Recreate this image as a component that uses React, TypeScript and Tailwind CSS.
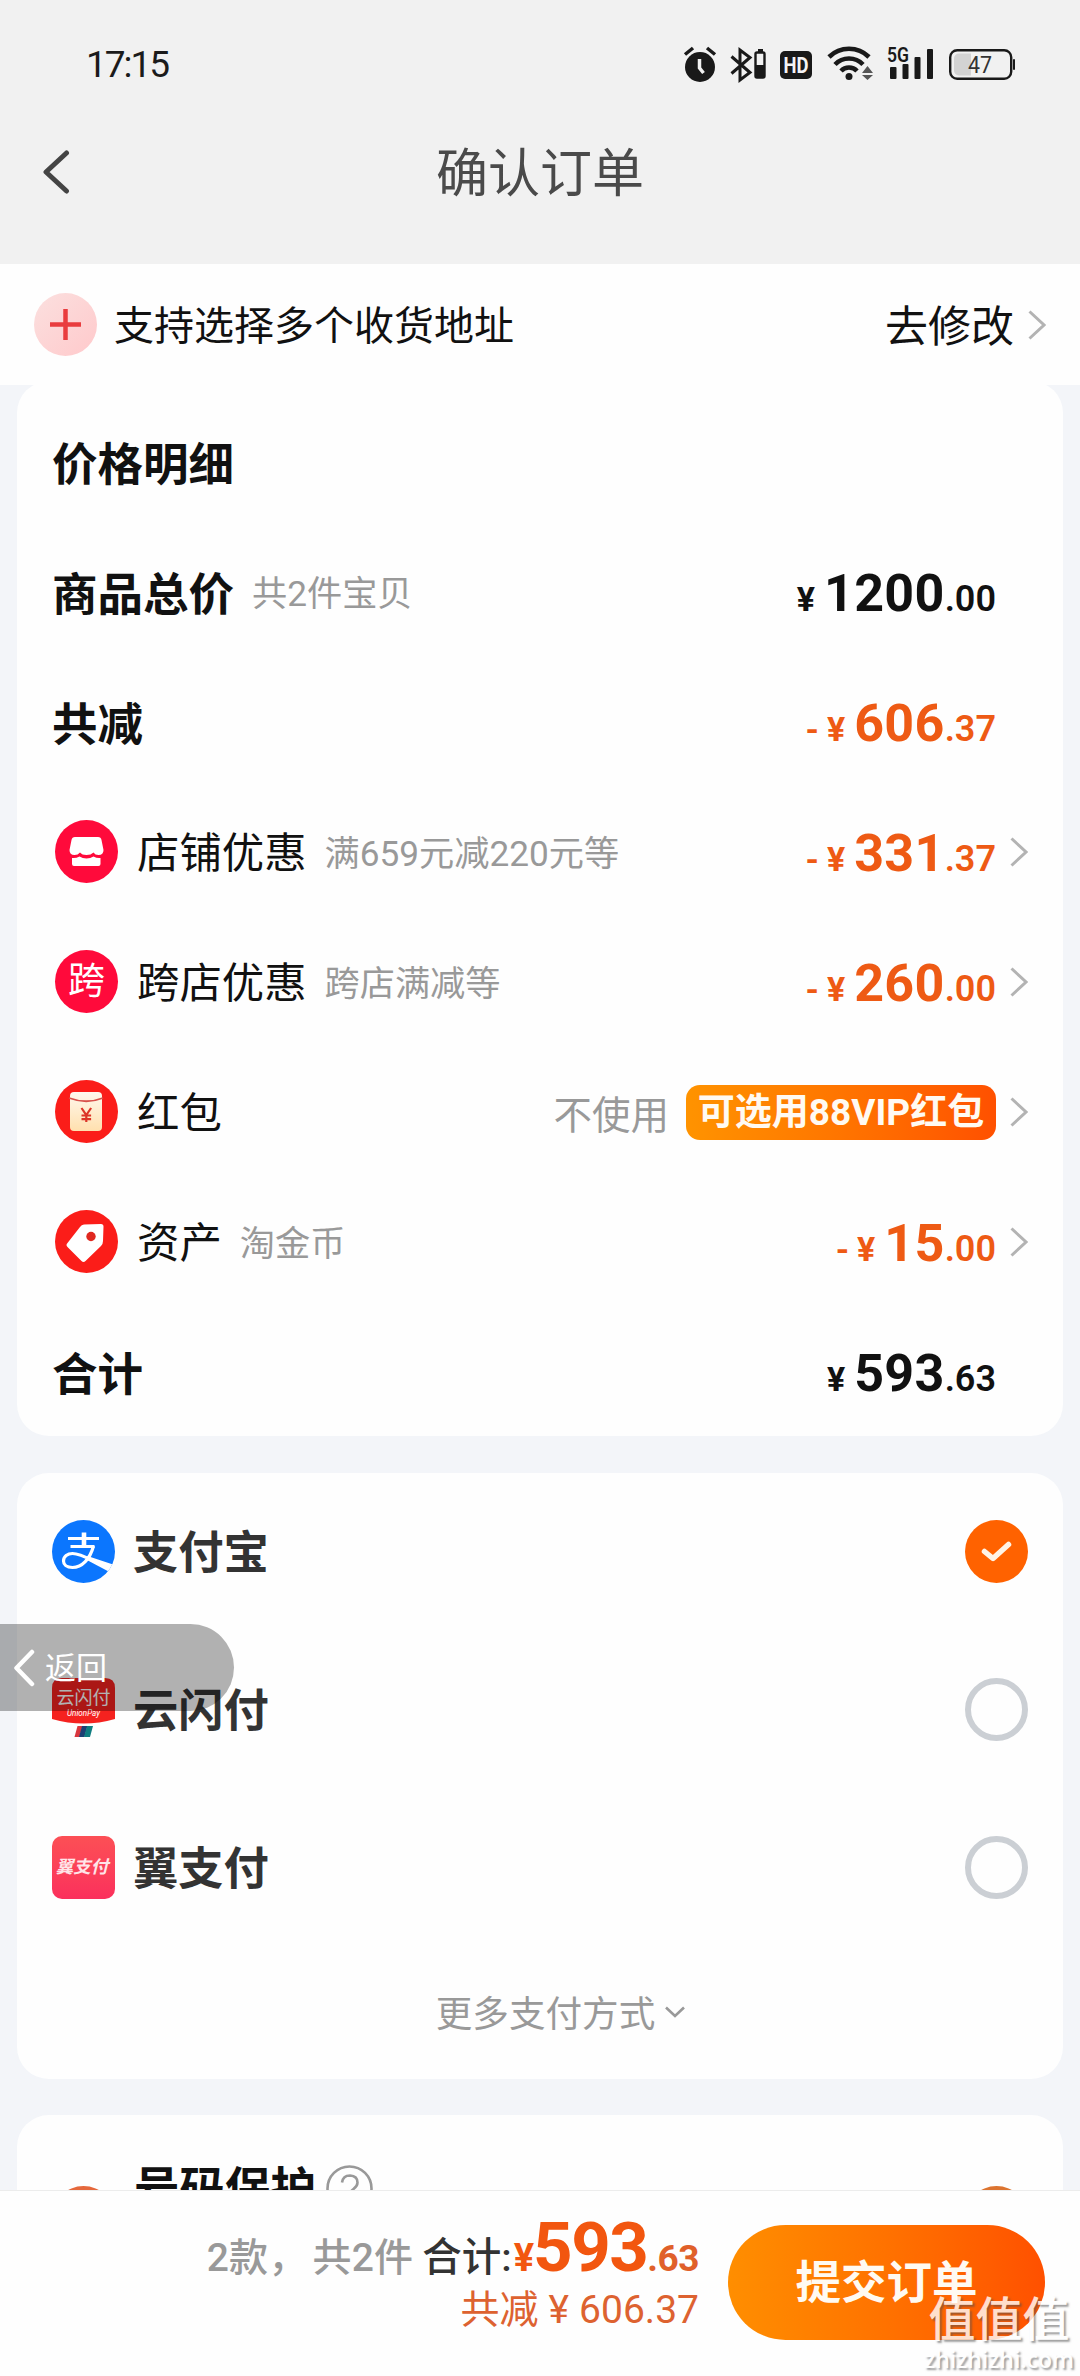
import React from "react";

const CJK = "font-['Roboto','Noto_Sans_CJK_SC',sans-serif]";

function Chevron() {
  return (
    <svg width="18" height="30" viewBox="0 0 18 30" fill="none" stroke="#b3b3b3" strokeWidth="3">
      <path d="M1.5 1.5 16 15 1.5 28.5" />
    </svg>
  );
}

function StatusBar() {
  return (
    <div className="flex h-[130px] items-center justify-between pl-[86px] pr-[65px]">
      <span className="text-[37px] leading-[40px] tracking-[-2px] text-[#1b1b1b]">17:15</span>
      <svg width="332" height="40" viewBox="0 0 332 40" fill="#191919">
        {/* alarm clock */}
        <circle cx="17" cy="22" r="15" />
        <path d="M2 9.500 10 3M32 9.500 24 3" stroke="#191919" strokeWidth="3.500" />
        <path d="M16.500 14v9l4 5" stroke="#f1f1f1" strokeWidth="3.500" fill="none" />
        {/* bluetooth with battery */}
        <path d="M48.500 11.500 67 27.500 57 35V5l10 7.500L48.500 28.500" fill="none" stroke="#191919" strokeWidth="3" />
        <path d="M75 4h5v3h-5z" />
        <rect x="72.500" y="7.500" width="9" height="25" rx="1.500" fill="none" stroke="#191919" strokeWidth="2.400" />
        <path d="M72.500 20h9v12.500h-9z" />
        {/* HD */}
        <rect x="97" y="6" width="32" height="28" rx="5" />
        <text x="113" y="28" fontSize="22" fontWeight="700" fill="#f4f4f4" textAnchor="middle" textLength="25" lengthAdjust="spacingAndGlyphs" fontFamily="Roboto">HD</text>
        {/* wifi */}
        <g fill="none" stroke="#191919" strokeWidth="4.600">
          <path d="M146 12a28.500 28.500 0 0 1 40 0" />
          <path d="M152 19.500a19.500 19.500 0 0 1 28 0" />
          <path d="M158 26a11 11 0 0 1 16 0" />
        </g>
        <circle cx="166" cy="31.500" r="3.500" />
        <path d="M184.500 21l5.500 7h-11zM184.500 35l5.500-5h-11z" fill="#555" />
        {/* signal */}
        <rect x="207" y="22" width="6.500" height="12" rx="1" />
        <rect x="219.500" y="19" width="6" height="15" rx="1" />
        <rect x="231.500" y="12" width="6" height="22" rx="1" />
        <rect x="244" y="4" width="6" height="30" rx="1" />
        <text x="204" y="17" fontSize="20" fontWeight="600" textLength="22" lengthAdjust="spacingAndGlyphs" fontFamily="Roboto">5G</text>
        {/* battery */}
        <rect x="267.200" y="5.200" width="61" height="28.600" rx="7" fill="none" stroke="#191919" strokeWidth="2.400" />
        <path d="M276 8.500h12v22h-12a5 5 0 0 1-5-5v-12a5 5 0 0 1 5-5z" fill="#d3d3d3" />
        <rect x="330" y="14" width="2" height="11" rx="1" />
        <text x="297" y="28" fontSize="24" fill="#333" textAnchor="middle" textLength="24" lengthAdjust="spacingAndGlyphs" fontFamily="Roboto">47</text>
      </svg>
    </div>
  );
}

function Header() {
  return (
    <header className="h-[264px] bg-[#f1f1f1]">
      <StatusBar />
      <div className="grid h-[84px] grid-cols-[1fr_auto_1fr] items-center px-[42px]">
        <svg width="28" height="44" viewBox="0 0 28 44" fill="none" stroke="#444" strokeWidth="5" strokeLinecap="round" strokeLinejoin="round">
          <path d="M24.500 3 4 22 24.500 41" />
        </svg>
        <h1 className="pt-[6px] text-[52px] leading-[60px] text-[#4a4a4a]">确认订单</h1>
      </div>
    </header>
  );
}

function AddressRow() {
  return (
    <div className="flex h-[121px] items-center bg-[#fefefe] pl-[34px] pr-[34px]">
      <svg width="63" height="63" viewBox="0 0 63 63">
        <defs>
          <linearGradient id="plus" x1="0" y1="0" x2="1" y2="1">
            <stop offset="0" stopColor="#fbe0df" />
            <stop offset="1" stopColor="#ffc9cb" />
          </linearGradient>
        </defs>
        <circle cx="31.500" cy="31.500" r="31.500" fill="url(#plus)" />
        <path d="M31.500 16v31M16 31.500h31" stroke="#e93c3e" strokeWidth="4.500" />
      </svg>
      <span className="ml-[17px] pt-[5px] text-[40px] leading-[48px] text-[#111]">支持选择多个收货地址</span>
      <span className="ml-auto mr-[14px] pt-[5px] text-[43px] leading-[48px] text-[#111]">去修改</span>
      <Chevron />
    </div>
  );
}

function Price({ value, minus = false }: { value: string; minus?: boolean }) {
  const [whole, cents] = value.split(".");
  return (
    <div className={`flex items-baseline pt-[5px] font-bold leading-[60px] ${minus ? "text-[#ee5a14]" : "text-[#111]"}`}>
      {minus && <span className="mr-[8px] text-[34px]">-</span>}
      <span className="mr-[9px] text-[34px]">¥</span>
      <span className="text-[52px] tracking-[0.3px]">{whole}</span>
      <span className="text-[36px] font-semibold">.{cents}</span>
    </div>
  );
}

function ShopIcon() {
  return (
    <svg width="63" height="63" viewBox="0 0 63 63">
      <circle cx="31.500" cy="31.500" r="31.500" fill="#ff0a3b" />
      <path d="M20 17h23q3 0 3.500 3l2 10q0 5-5 5-3.500 0-5-2.500Q36 35 31.500 35q-4.500 0-6.500-2.500-2 2.500-5.500 2.500-5 0-5-5l2-10q.5-3 3.500-3z" fill="#fff" />
      <path d="M17 38q4 .5 7.500-1.500 3 2 7 2t7-2q3.500 2 7 1.500v6q0 2-2 2h-24.500q-2 0-2-2z" fill="#fff" />
    </svg>
  );
}

function CrossIcon() {
  return (
    <div className="flex h-[63px] w-[63px] items-center justify-center rounded-full bg-[#ff0a3b] text-[37px] leading-none text-white">
      <span>跨</span>
    </div>
  );
}

function PacketIcon() {
  return (
    <svg width="63" height="63" viewBox="0 0 63 63">
      <defs>
        <linearGradient id="packet" x1="0" y1="0" x2="0" y2="1">
          <stop offset="0" stopColor="#fff8ee" />
          <stop offset="1" stopColor="#ffe0ae" />
        </linearGradient>
      </defs>
      <circle cx="31.500" cy="31.500" r="31.500" fill="#fb1d19" />
      <rect x="15" y="12" width="32" height="39" rx="4" fill="url(#packet)" />
      <path d="M14 18q17.500 6.500 34 0" fill="none" stroke="#d8504a" strokeWidth="1.800" />
      <path d="m26.500 28 4.800 7 4.800-7M31.300 35v7M26.500 35.500h9.600M26.500 39.200h9.600" fill="none" stroke="#dc3528" strokeWidth="2.200" />
    </svg>
  );
}

function TagIcon() {
  return (
    <svg width="63" height="63" viewBox="0 0 63 63">
      <circle cx="31.500" cy="31.500" r="31.500" fill="#fb1d19" />
      <path d="M29 14.500 46 14q2.500 0 2.500 2.500L48 31q0 3-2 5L30.500 51q-2 2-4 0L12.500 37q-2-2 0-4L25 17q1.500-2.300 4-2.500z" fill="#fff" />
      <circle cx="36" cy="26.500" r="4.700" fill="#e0281f" />
    </svg>
  );
}

function DiscountRow({ icon, label, note, children }: { icon: React.ReactNode; label: string; note?: string; children: React.ReactNode }) {
  return (
    <div className="flex h-[130px] items-center pb-[5px] pl-[38px] pr-[35px]">
      {icon}
      <span className="ml-[19px] pt-[5px] text-[42.400px] leading-[50px] text-[#111]">{label}</span>
      {note && <span className="ml-[18px] pt-[5px] text-[35.200px] leading-[50px] text-[#999]">{note}</span>}
      <div className="ml-auto mr-[14px] flex items-center pt-[5px]">{children}</div>
      <Chevron />
    </div>
  );
}

function SummaryRow({ label, note, children }: { label: string; note?: string; children?: React.ReactNode }) {
  return (
    <div className="flex h-[130px] items-center pl-[35px] pr-[67px]">
      <span className="pt-[3px] text-[45.500px] font-bold leading-[54px] text-[#111]">{label}</span>
      {note && <span className="ml-[18px] text-[35.200px] leading-[50px] text-[#999]">{note}</span>}
      <div className="ml-auto">{children}</div>
    </div>
  );
}

function PriceCard() {
  return (
    <section className="relative -mt-[4px] mx-[17px] h-[1055px] rounded-[32px] bg-[#fefefe] pt-[18px]">
      <SummaryRow label="价格明细" />
      <SummaryRow label="商品总价" note="共2件宝贝"><Price value="1200.00" /></SummaryRow>
      <SummaryRow label="共减"><Price value="606.37" minus /></SummaryRow>
      <DiscountRow icon={<ShopIcon />} label="店铺优惠" note="满659元减220元等"><Price value="331.37" minus /></DiscountRow>
      <DiscountRow icon={<CrossIcon />} label="跨店优惠" note="跨店满减等"><Price value="260.00" minus /></DiscountRow>
      <DiscountRow icon={<PacketIcon />} label="红包">
        <span className="mr-[17px] pt-[3px] text-[38.500px] leading-[50px] text-[#999]">不使用</span>
        <span className="-mt-[4px] flex h-[55px] w-[310px] items-center justify-center rounded-[14px] bg-gradient-to-r from-[#ff9300] to-[#ff5000] pt-[2px] text-[37px] font-bold text-[#fffaf2]">可选用88VIP红包</span>
      </DiscountRow>
      <DiscountRow icon={<TagIcon />} label="资产" note="淘金币"><Price value="15.00" minus /></DiscountRow>
      <SummaryRow label="合计"><Price value="593.63" /></SummaryRow>
    </section>
  );
}

function AlipayIcon() {
  return (
    <svg width="63" height="63" viewBox="0 0 63 63">
      <clipPath id="ali"><circle cx="31.500" cy="31.500" r="31.500" /></clipPath>
      <circle cx="31.500" cy="31.500" r="31.500" fill="#0b76fe" />
      <g clipPath="url(#ali)" fill="none" stroke="#fff">
        <path d="M16 18.500h31M18.500 26.500h24" strokeWidth="2.800" />
        <path d="M32 12.500V27" strokeWidth="4.600" />
        <path d="M41.500 26C38 39 30 47.500 20.500 47.500c-6 0-9-3-9-6.500 0-4.500 4-7.500 9-7.500 7 0 14 4 24 9" strokeWidth="3.200" />
        <path d="M35.500 36 61 44.500l-3.500 7.500L34 39.500z" fill="#fff" stroke="none" />
      </g>
    </svg>
  );
}

function UnionPayIcon() {
  return (
    <svg width="63" height="63" viewBox="0 0 63 63">
      <path d="M10 0h43q10 0 10 10v31Q31.500 50 0 41V10Q0 0 10 0z" fill="#f5221f" />
      <text x="31.500" y="26" fontSize="18" fill="#fff" textAnchor="middle" fontFamily="Noto Sans CJK SC">云闪付</text>
      <text x="31.500" y="37.500" fontSize="8.500" fontStyle="italic" fill="#fff" textAnchor="middle" textLength="33" lengthAdjust="spacingAndGlyphs" fontFamily="Roboto">UnionPay</text>
      <path d="M25.500 48h5l-3 11h-5z" fill="#d9363e" />
      <path d="M30 48h5.500l-3 11H27z" fill="#1d3f73" />
      <path d="M35 48h6l-3 11h-6z" fill="#0f7d80" />
    </svg>
  );
}

function BestPayIcon() {
  return (
    <div className="flex h-[63px] w-[63px] items-center justify-center rounded-[10px] bg-gradient-to-b from-[#fc4f55] to-[#fb2f5c] text-[17.500px] font-bold italic leading-none text-[#ffe4e8]">
      <span className="-ml-[3px] pt-[2px]">翼支付</span>
    </div>
  );
}

function CheckedRadio() {
  return (
    <svg width="63" height="63" viewBox="0 0 63 63">
      <circle cx="31.500" cy="31.500" r="31.500" fill="#ff6200" />
      <path d="M19.500 31.500 28 38.500 43.500 24.500" fill="none" stroke="#fff4e6" strokeWidth="5.500" strokeLinecap="round" strokeLinejoin="round" />
    </svg>
  );
}

function PayRow({ icon, label, checked = false }: { icon: React.ReactNode; label: string; checked?: boolean }) {
  return (
    <div className="flex h-[158px] items-center pb-[2px] pl-[35px] pr-[35px]">
      {icon}
      <span className="ml-[18px] pt-[6px] text-[45.300px] font-bold leading-[54px] text-[#333]">{label}</span>
      <div className="ml-auto">
        {checked ? <CheckedRadio /> : <div className="h-[63px] w-[63px] rounded-full border-[6px] border-[#cbcfd4]" />}
      </div>
    </div>
  );
}

function PayCard() {
  return (
    <section className="mx-[17px] mt-[37px] h-[606px] rounded-[32px] bg-[#fefefe]">
      <PayRow icon={<AlipayIcon />} label="支付宝" checked />
      <PayRow icon={<UnionPayIcon />} label="云闪付" />
      <PayRow icon={<BestPayIcon />} label="翼支付" />
      <div className="flex h-[132px] items-center justify-center gap-[10px] pl-[41px] pt-[4px] text-[36.600px] text-[#999]">
        更多支付方式
        <svg className="-mt-[7px]" width="20" height="12" viewBox="0 0 20 12" fill="none" stroke="#999" strokeWidth="2.600">
          <path d="M1 1.500 10 10l9-8.500" />
        </svg>
      </div>
    </section>
  );
}

function ProtectCard() {
  return (
    <section className="mx-[17px] mt-[36px] h-[75px] overflow-hidden rounded-t-[32px] bg-[#fefefe] pl-[35px] pr-[35px] pt-[43px]">
      <div className="flex h-[63px] items-center">
        <div className="mt-[56px] h-[63px] w-[63px] rounded-full bg-[#e5683c]" />
        <span className="ml-[19px] text-[45.500px] font-bold leading-[54px] text-[#111]">号码保护</span>
        <svg className="-mt-[3px] ml-[10px]" width="47" height="47" viewBox="0 0 47 47" fill="none" stroke="#999" strokeWidth="2.600">
          <circle cx="23.500" cy="23.500" r="22" />
          <path d="M16 17.500q1-7 8-7 7.500.5 7.500 7 0 3.500-4 6.500-4 3-4 7" />
        </svg>
        <div className="ml-auto mt-[56px] h-[63px] w-[63px] rounded-full bg-[#dc7430]" />
      </div>
    </section>
  );
}

function BottomBar() {
  return (
    <footer className="relative flex h-[186px] justify-end border-t border-[#ececec] bg-[#fefefe] pr-[35px]">
      <div className="mr-[29px] flex flex-col items-end pt-[23px]">
        <div className="flex h-[68px] items-baseline font-bold leading-[68px]">
          <span className="text-[39px] font-medium tracking-[0.200px] text-[#999]">2款<span className="mr-[5px]">，</span>共2件</span>
          <span className="ml-[9px] text-[39.500px] font-medium text-[#333]">合计:</span>
          <span className="ml-[2px] text-[38px] tracking-[-1px] text-[#f2560f]">¥</span>
          <span className="text-[69px] tracking-[-1.500px] text-[#f2560f]">593</span>
          <span className="text-[37px] tracking-[-0.500px] text-[#e0602a]">.63</span>
        </div>
        <div className="mt-[4px] flex items-baseline whitespace-pre text-[39px] leading-[48px] text-[#dd6230]">
          共减<span className="mx-[10px]">¥</span>606.37
        </div>
      </div>
      <button className="mt-[34px] h-[115px] w-[317px] rounded-full bg-gradient-to-r from-[#ff8e00] to-[#ff5000] pt-[4px] text-[45.500px] font-bold text-[#fffaf2]">
        提交订单
      </button>
      <div className="absolute bottom-[2px] right-[6px] flex flex-col items-center text-white opacity-80 [text-shadow:2px_2px_2px_rgba(80,80,80,0.7)]">
        <span className="text-[47px] font-medium leading-[48px]">值值值</span>
        <span className="font-['Open_Sans',sans-serif] text-[23px] font-semibold leading-[30px]">zhizhizhi.com</span>
      </div>
    </footer>
  );
}

function BackPill() {
  return (
    <div className="absolute left-0 top-[1624px] flex h-[87px] w-[234px] items-center rounded-r-full bg-black/30 pl-[13px] text-white">
      <svg width="22" height="38" viewBox="0 0 22 38" fill="none" stroke="#fff" strokeWidth="4.500" strokeLinecap="round" strokeLinejoin="round">
        <path d="M19 3 3.500 19 19 35" />
      </svg>
      <span className="ml-[10px] mt-[4px] text-[31px]">返回</span>
    </div>
  );
}

export default function App() {
  return (
    <div className={`relative h-[2376px] w-[1080px] overflow-hidden bg-[#f3f5f9] ${CJK}`}>
      <Header />
      <AddressRow />
      <PriceCard />
      <PayCard />
      <ProtectCard />
      <BottomBar />
      <BackPill />
    </div>
  );
}
